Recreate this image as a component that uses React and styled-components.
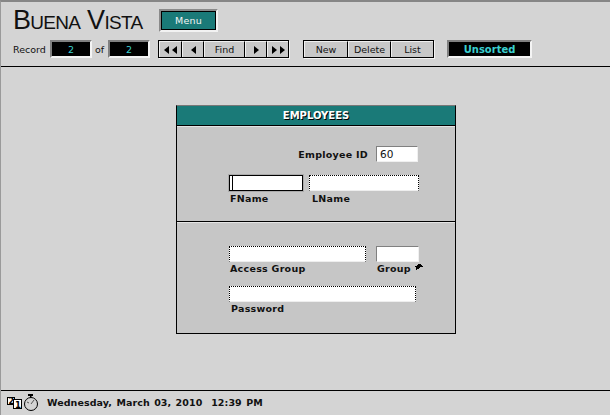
import React from 'react';
import styled, { createGlobalStyle } from 'styled-components';

const Global = createGlobalStyle`
    html, body {
        margin: 0;
        padding: 0;
        background: #d4d4d4;
    }
    body {
        font-family: "DejaVu Sans", sans-serif;
        color: #000;
    }
`;

const Page = styled.div`
    width: 610px;
    height: 415px;
    display: flex;
    flex-direction: column;
    overflow: hidden;
    background: #d4d4d4;
    box-sizing: border-box;
    border-top: 2px solid #868686;
    border-left: 1px solid #9a9a9a;
`;

const Header = styled.header`
    height: 65px;
    flex: none;
    box-sizing: border-box;
    border-bottom: 1px solid #000;
    padding: 7px 0 0 12px;
`;

const TitleRow = styled.div`
    display: flex;
    align-items: flex-start;
    height: 31px;
`;

const Title = styled.h1`
    width: 146px;
    margin: 0;
    font: 400 27px/22px "Liberation Sans", sans-serif;
    font-variant: small-caps;
    letter-spacing: -0.7px;
    color: #111;
    white-space: nowrap;
`;

const MenuWell = styled.div`
    width: 59px;
    height: 23px;
    box-sizing: border-box;
    border: 2px solid;
    border-color: #8a8a8a #f2f2f2 #f2f2f2 #8a8a8a;
`;

const MenuButton = styled.button`
    display: block;
    width: 100%;
    height: 100%;
    padding: 0;
    box-sizing: border-box;
    background: #1a7a78;
    color: #f4f4f4;
    font: 400 9.5px "DejaVu Sans", sans-serif;
    letter-spacing: 0.2px;
    border: 1px solid #000;
`;

const Toolbar = styled.div`
    display: flex;
    align-items: center;
    height: 18px;
`;

const RecordLabel = styled.span`
    font: 400 9.5px "DejaVu Sans", sans-serif;
    color: #111;
    width: ${p => p.$w}px;
    padding-left: ${p => p.$pad || 0}px;
    box-sizing: border-box;
`;

const Readout = styled.div`
    width: ${p => p.$w}px;
    height: 18px;
    margin-right: ${p => p.$mr || 0}px;
    box-sizing: border-box;
    background: #000;
    color: #3ad0d0;
    display: flex;
    align-items: center;
    justify-content: center;
    border: 2px solid;
    border-color: #808080 #f4f4f4 #f4f4f4 #808080;
    font: ${p => (p.$bold ? '700 10px' : '400 9.5px')} "DejaVu Sans", sans-serif;
`;

const ButtonGroup = styled.div`
    display: flex;
    height: 18px;
    margin-right: ${p => p.$mr || 0}px;
    box-sizing: border-box;
    border: 1px solid #000;
    box-shadow: 1px 1px 0 #f4f4f4;
`;

const ToolButton = styled.button`
    width: ${p => p.$w}px;
    height: 100%;
    padding: 0;
    box-sizing: border-box;
    background: #c8c8c8;
    border: none;
    border-top: 1px solid #f0f0f0;
    border-left: 1px solid #f0f0f0;
    border-right: ${p => (p.$last ? '0' : '1px solid #000')};
    display: flex;
    align-items: center;
    justify-content: center;
    gap: 3px;
    color: #111;
    font: 400 9.5px "DejaVu Sans", sans-serif;
`;

const Arrow = ({ left }) => (
    <svg width="5" height="8" viewBox="0 0 5 8">
        <path d={left ? 'M5 0 L0 4 L5 8 Z' : 'M0 0 L5 4 L0 8 Z'} fill="#000" />
    </svg>
);

const Body = styled.main`
    flex: 1;
    display: flex;
    align-items: flex-start;
    padding: 38px 0 0 175px;
`;

const Card = styled.section`
    width: 280px;
    height: 229px;
    box-sizing: border-box;
    background: #c6c6c6;
    border: 1px solid #000;
    border-top-color: #777;
    display: flex;
    flex-direction: column;
`;

const CardTitle = styled.h2`
    height: 20px;
    flex: none;
    margin: 0;
    box-sizing: border-box;
    background: #1a7a78;
    border-bottom: 1px solid #000;
    color: #fff;
    font: 700 10px/19px "DejaVu Sans", sans-serif;
    text-align: center;
    text-shadow: 1px 1px 0 #000;
`;

const TopSection = styled.div`
    height: 96px;
    flex: none;
    box-sizing: border-box;
    border-top: 1px solid #e4e4e4;
    border-bottom: 1px solid #000;
    padding: 19px 0 0 52px;
`;

const BottomSection = styled.div`
    flex: 1;
    border-top: 1px solid #e4e4e4;
    padding: 23px 0 0 52px;
`;

const IdRow = styled.div`
    display: flex;
    align-items: center;
    justify-content: flex-end;
    width: 189px;
    gap: 8px;
    margin-bottom: 13px;
`;

const Row = styled.div`
    display: flex;
    align-items: flex-start;
    gap: ${p => p.$gap || 6}px;
    margin-bottom: ${p => p.$mb || 0}px;
`;

const Field = styled.div`
    width: ${p => p.$w}px;
`;

const Input = styled.div`
    width: 100%;
    height: 16px;
    box-sizing: border-box;
    background: #fff;
    font: 400 10.5px/14px "DejaVu Sans", sans-serif;
    padding-left: 3px;
    color: #111;
    ${p => p.$kind === 'active' && `
        border: 1px solid #000;
        outline: 1px solid #aaa;
    `}
    ${p => p.$kind === 'inset' && `
        border: 1px solid;
        border-color: #808080 #f0f0f0 #f0f0f0 #808080;
    `}
    ${p => p.$kind === 'dotted' && `
        border: 1px dotted #000;
        border-bottom: 1px solid #eee;
        border-left-color: #000;
    `}
`;

const Caret = styled.span`
    display: block;
    width: 1px;
    height: 14px;
    margin-left: -1px;
    background: #000;
`;

const Label = styled.label`
    display: flex;
    align-items: center;
    gap: 5px;
    margin: ${p => p.$top || 1}px 0 0 ${p => p.$left || 1}px;
    font: 700 9.5px/12px "DejaVu Sans", sans-serif;
    letter-spacing: 0.27px;
    color: #111;
    white-space: nowrap;

    svg {
        flex: none;
        margin: -5px 0 0 -1px;
    }
`;

const Footer = styled.footer`
    height: 25px;
    flex: none;
    box-sizing: border-box;
    border-top: 1px solid #000;
    display: flex;
    align-items: center;
    gap: 7px;
    padding: 0 0 2px 5px;
`;

const FooterIcons = styled.svg`
    flex: none;
`;

const DateText = styled.span`
    font: 700 9.5px "DejaVu Sans", sans-serif;
    letter-spacing: 0.08px;
    word-spacing: 1px;
    color: #111;
    white-space: pre;
`;

const App = () => (
    <>
        <Global />
        <Page>
            <Header>
                <TitleRow>
                    <Title>Buena Vista</Title>
                    <MenuWell><MenuButton>Menu</MenuButton></MenuWell>
                </TitleRow>
                <Toolbar>
                    <RecordLabel $w={37}>Record</RecordLabel>
                    <Readout $w={42}>2</Readout>
                    <RecordLabel $w={16} $pad={3}>of</RecordLabel>
                    <Readout $w={42} $mr={8}>2</Readout>
                    <ButtonGroup $mr={14}>
                        <ToolButton $w={23}><Arrow left /><Arrow left /></ToolButton>
                        <ToolButton $w={22}><Arrow left /></ToolButton>
                        <ToolButton $w={41}>Find</ToolButton>
                        <ToolButton $w={22}><Arrow /></ToolButton>
                        <ToolButton $w={21} $last><Arrow /><Arrow /></ToolButton>
                    </ButtonGroup>
                    <ButtonGroup $mr={13}>
                        <ToolButton $w={44}>New</ToolButton>
                        <ToolButton $w={43}>Delete</ToolButton>
                        <ToolButton $w={42} $last>List</ToolButton>
                    </ButtonGroup>
                    <Readout $w={85} $bold>Unsorted</Readout>
                </Toolbar>
            </Header>
            <Body>
                <Card>
                    <CardTitle>EMPLOYEES</CardTitle>
                    <TopSection>
                        <IdRow>
                            <Label $top={0} $left={0}>Employee ID</Label>
                            <Field $w={42}><Input $kind="inset">60</Input></Field>
                        </IdRow>
                        <Row>
                            <Field $w={74}>
                                <Input $kind="active"><Caret /></Input>
                                <Label $top={2}>FName</Label>
                            </Field>
                            <Field $w={110}>
                                <Input $kind="dotted" />
                                <Label $top={2} $left={3}>LName</Label>
                            </Field>
                        </Row>
                    </TopSection>
                    <BottomSection>
                        <Row $gap={10} $mb={11}>
                            <Field $w={137}>
                                <Input $kind="dotted" />
                                <Label>Access Group</Label>
                            </Field>
                            <Field $w={43}>
                                <Input $kind="inset" />
                                <Label>
                                    Group
                                    <svg width="8" height="6" viewBox="0 0 8 6">
                                        <path d="M3 0 H6 V1 H7 V2 H8 V3 H5 V4 H4 V5 H2 V6 H1 V3 H0 V2 H2 V1 H3 Z" fill="#000" />
                                    </svg>
                                </Label>
                            </Field>
                        </Row>
                        <Field $w={187}>
                            <Input $kind="dotted" />
                            <Label $left={2}>Password</Label>
                        </Field>
                    </BottomSection>
                </Card>
            </Body>
            <Footer>
                <FooterIcons width="34" height="20" viewBox="0 0 34 20">
                    <rect x="1.5" y="5.5" width="7" height="7" fill="#fff" stroke="#000" />
                    <text x="2.4" y="12" fontFamily="DejaVu Sans" fontWeight="700" fontSize="8" fill="#000">2</text>
                    <rect x="7.5" y="7.5" width="8" height="9" fill="#fff" stroke="#000" />
                    <text x="9" y="15.5" fontFamily="DejaVu Sans" fontWeight="700" fontSize="8.5" fill="#000">1</text>
                    <rect x="22" y="2" width="5" height="2" fill="#000" />
                    <rect x="24" y="4" width="1.5" height="2" fill="#000" />
                    <circle cx="25" cy="12" r="6.5" fill="#d4d4d4" stroke="#000" />
                    <path d="M25 12 L28 8 M21 10 L23 11" stroke="#555" fill="none" />
                </FooterIcons>
                <DateText>Wednesday, March 03, 2010  12:39 PM</DateText>
            </Footer>
        </Page>
    </>
);

export default App;
